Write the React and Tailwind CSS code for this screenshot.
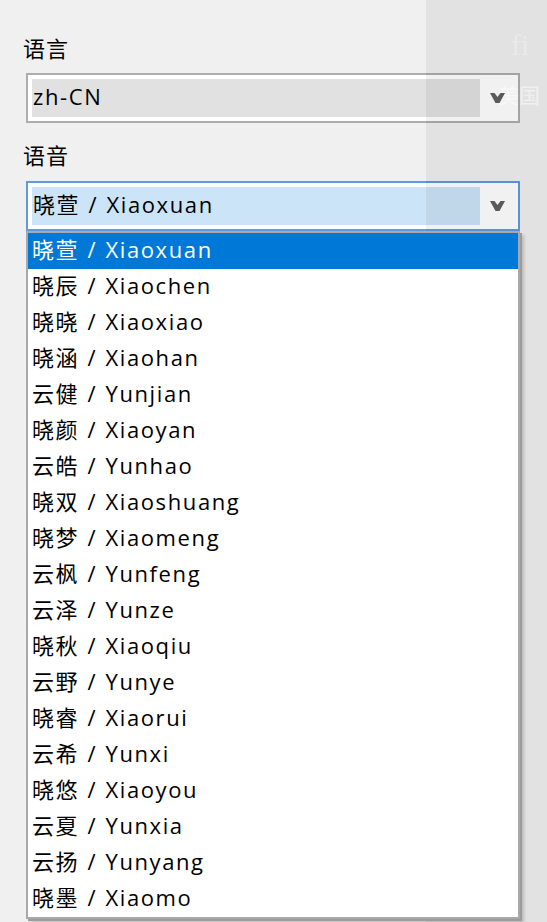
import React from "react";

const voices = [
  "晓萱 / Xiaoxuan",
  "晓辰 / Xiaochen",
  "晓晓 / Xiaoxiao",
  "晓涵 / Xiaohan",
  "云健 / Yunjian",
  "晓颜 / Xiaoyan",
  "云皓 / Yunhao",
  "晓双 / Xiaoshuang",
  "晓梦 / Xiaomeng",
  "云枫 / Yunfeng",
  "云泽 / Yunze",
  "晓秋 / Xiaoqiu",
  "云野 / Yunye",
  "晓睿 / Xiaorui",
  "云希 / Yunxi",
  "晓悠 / Xiaoyou",
  "云夏 / Yunxia",
  "云扬 / Yunyang",
  "晓墨 / Xiaomo",
];

function Chevron() {
  return (
    <svg width="15" height="12" viewBox="0 0 15 12" className="relative z-20">
      <polygon points="0,1 4.5,1 7.5,5 10.5,1 15,1 9.5,11 5.5,11" fill="#5a5a5a" />
    </svg>
  );
}

function Select({ value, focused }) {
  return (
    <div
      className={
        focused
          ? "flex h-[50px] items-stretch border-2 border-[#5f9cdb] bg-white p-[4px]"
          : "flex h-[50px] items-stretch border-2 border-[#adadad] bg-white p-[4px]"
      }
    >
      <div
        className={
          focused
            ? "flex w-[448px] items-center bg-[#cce4f7] pb-[3px] pl-[1px]"
            : "flex w-[448px] items-center bg-[#e1e1e1] pb-[3px] pl-[1px]"
        }
      >
        <span className="tracking-[1.6px] [word-spacing:1px]">{value}</span>
      </div>
      <div className="flex flex-1 items-center justify-center pl-[1px]">
        <Chevron />
      </div>
    </div>
  );
}

export default function App() {
  return (
    <div className="relative h-[922px] w-[547px] overflow-hidden bg-[#f0f0f0] font-['Open_Sans','Noto_Sans_CJK_SC',sans-serif] text-[22px] text-black">
      <div className="pl-[26px] pr-[27px] pt-[35px]">
        <div className="-ml-[3px] mb-[8px] flex h-[30px] items-center pb-[4px] tracking-[1px]">语言</div>
        <Select value="zh-CN" />
        <div className="-ml-[3px] mt-[19px] mb-[9px] flex h-[30px] items-center pb-[4px] tracking-[1px]">语音</div>
        <div className="relative">
          <Select value="晓萱 / Xiaoxuan" focused />
          <div className="absolute left-0 right-0 top-full z-30 border-2 border-[#a9a9a9] bg-white shadow-[2px_2px_0_#9c9c9c,4px_4px_3px_rgba(0,0,0,0.18)]">
            {voices.map((v, i) => (
              <div
                key={v}
                className={
                  i === 0
                    ? "flex h-[36px] items-center bg-[#0078d7] pb-[3px] pl-[4px] tracking-[1.6px] text-white [word-spacing:1px]"
                    : "flex h-[36px] items-center pb-[3px] pl-[4px] tracking-[1.6px] [word-spacing:1px]"
                }
              >
                {v}
              </div>
            ))}
          </div>
        </div>
      </div>

      <div className="pointer-events-none absolute bottom-0 left-[426px] right-0 top-0 z-10 bg-black/[0.055]" />
      <div className="pointer-events-none absolute left-[511px] top-[22px] z-10 font-['Liberation_Serif',serif] text-[30px] text-white/30">
        fi
      </div>
      <div className="pointer-events-none absolute left-[498px] top-[79px] z-10 whitespace-nowrap font-['Noto_Sans_CJK_SC',sans-serif] text-[21px] text-white/50">
        美国
      </div>
    </div>
  );
}
